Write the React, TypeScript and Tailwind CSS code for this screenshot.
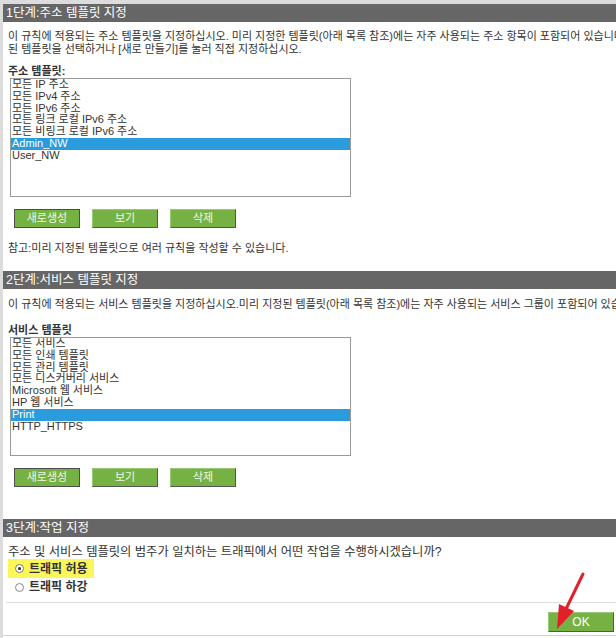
import React from 'react';

const addressItems = ['모든 IP 주소', '모든 IPv4 주소', '모든 IPv6 주소', '모든 링크 로컬 IPv6 주소', '모든 비링크 로컬 IPv6 주소', 'Admin_NW', 'User_NW'];
const serviceItems = ['모든 서비스', '모든 인쇄 템플릿', '모든 관리 템플릿', '모든 디스커버리 서비스', 'Microsoft 웹 서비스', 'HP 웹 서비스', 'Print', 'HTTP_HTTPS'];

function Header({ title }: { title: string }) {
  return <div className="h-[18px] bg-[#666666] pl-[3px] text-[12.5px] leading-[18px] text-white">{title}</div>;
}

function ListBox({ items, selected }: { items: string[]; selected: string }) {
  return (
    <div className="ml-[2px] h-[119px] w-[341px] overflow-hidden border border-[#9a9a9a] bg-white">
      {items.map((item) => (
        <div
          key={item}
          className={
            item === selected
              ? 'h-[11.8px] whitespace-nowrap bg-[#2a9bdc] pl-px leading-[11.8px] text-white'
              : 'h-[11.8px] whitespace-nowrap pl-px leading-[11.8px] text-[#333]'
          }
        >
          {item}
        </div>
      ))}
    </div>
  );
}

function GreenButton({ label, focused = false }: { label: string; focused?: boolean }) {
  return (
    <button
      className={
        focused
          ? 'h-[19px] w-[66px] border border-[#4d4d4d] bg-[#76b243] text-[11px] leading-[17px] text-[#eef7e6]'
          : 'h-[19px] w-[66px] border border-t-[#98c873] border-l-[#98c873] border-r-[#555] border-b-[#555] bg-[#76b243] text-[11px] leading-[17px] text-[#eef7e6]'
      }
    >
      {label}
    </button>
  );
}

function ButtonRow() {
  return (
    <div className="ml-[6px] flex gap-[12px]">
      <GreenButton label="새로생성" focused />
      <GreenButton label="보기" />
      <GreenButton label="삭제" />
    </div>
  );
}

export default function App() {
  return (
    <div
      className="relative h-[638px] w-[616px] overflow-hidden border-l-[3px] border-t-[4px] border-[#dcdcdc] bg-white text-[11px] text-[#333]"
      style={{ fontFamily: '"Liberation Sans", "Noto Sans CJK KR", sans-serif' }}
    >
      {/* 1단계 */}
      <Header title="1단계:주소 템플릿 지정" />
      <div className="pl-[5px]">
        <div className="mt-[8px] overflow-hidden whitespace-nowrap leading-[13px]">
          이 규칙에 적용되는 주소 템플릿을 지정하십시오. 미리 지정한 템플릿(아래 목록 참조)에는 자주 사용되는 주소 항목이 포함되어 있습니다.
        </div>
        <div className="overflow-hidden whitespace-nowrap leading-[13px]">된 템플릿을 선택하거나 [새로 만들기]를 눌러 직접 지정하십시오.</div>
        <div className="mt-[9px] font-bold leading-[13px]">주소 템플릿:</div>
        <ListBox items={addressItems} selected="Admin_NW" />
        <div className="mt-[12px]">
          <ButtonRow />
        </div>
        <div className="mt-[14px] leading-[13px]">참고:미리 지정된 템플릿으로 여러 규칙을 작성할 수 있습니다.</div>
      </div>

      {/* 2단계 */}
      <div className="mt-[16px]">
        <Header title="2단계:서비스 템플릿 지정" />
      </div>
      <div className="pl-[5px]">
        <div className="mt-[9px] overflow-hidden whitespace-nowrap leading-[13px]">
          이 규칙에 적용되는 서비스 템플릿을 지정하십시오.미리 지정된 템플릿(아래 목록 참조)에는 자주 사용되는 서비스 그룹이 포함되어 있습니다.
        </div>
        <div className="mt-[13px] font-bold leading-[13px]">서비스 템플릿</div>
        <ListBox items={serviceItems} selected="Print" />
        <div className="mt-[12px]">
          <ButtonRow />
        </div>
      </div>

      {/* 3단계 */}
      <div className="mt-[32px]">
        <Header title="3단계:작업 지정" />
      </div>
      <div className="pl-[5px]">
        <div className="mt-[8px] text-[12.3px] leading-[14px]">주소 및 서비스 템플릿의 범주가 일치하는 트래픽에서 어떤 작업을 수행하시겠습니까?</div>
        <div className="flex h-[19px] w-[86px] items-center bg-[#fbf75a] pl-[7px]">
          <span className="flex h-[9px] w-[9px] items-center justify-center rounded-full border border-[#777] bg-white">
            <span className="h-[3px] w-[3px] rounded-full bg-[#222]" />
          </span>
          <span className="ml-[5px] text-[12px] font-bold text-[#333]">트래픽 허용</span>
        </div>
        <div className="flex h-[18px] items-center pl-[7px]">
          <span className="h-[9px] w-[9px] rounded-full border border-[#888] bg-white" />
          <span className="ml-[5px] text-[12px] font-bold text-[#333]">트래픽 하강</span>
        </div>
      </div>
      <div className="ml-[3px] mt-[6px] border-t border-[#dedede]" />
      <div className="flex justify-end pr-[2px] pt-[9px]">
        <button className="h-[20px] w-[66px] border border-t-[#98c873] border-l-[#98c873] border-r-[#555] border-b-[#555] bg-[#76b243] text-[12px] text-white">
          OK
        </button>
      </div>
      <div className="mt-[3px] border-t border-[#d0d0d0]" />

      {/* annotation arrow */}
      <svg className="pointer-events-none absolute left-[-3px] top-[-4px]" width="616" height="638" viewBox="0 0 616 638">
        <line x1="583" y1="574" x2="565" y2="611" stroke="#e3202a" strokeWidth="3" strokeLinecap="round" />
        <polygon points="557,629 559,604 574,611" fill="#e3202a" />
      </svg>
    </div>
  );
}
